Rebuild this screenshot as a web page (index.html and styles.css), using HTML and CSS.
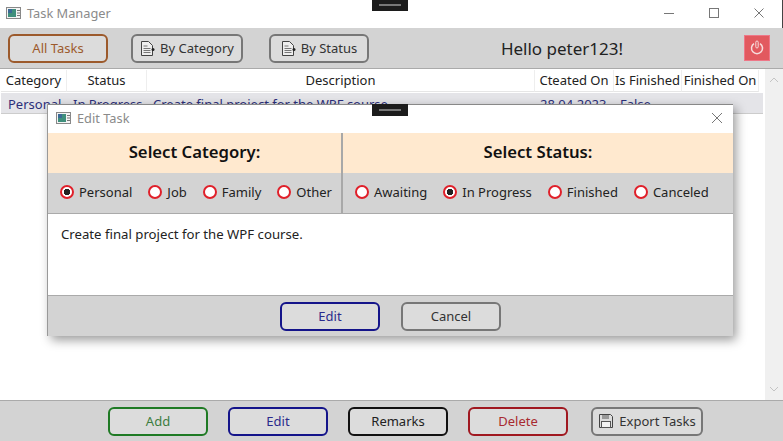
FILE: index.html

```html
<!DOCTYPE html>
<html lang="en">
<head>
  <meta charset="UTF-8" />
  <title>Task Manager</title>
  <link rel="stylesheet" href="styles.css">
</head>
<body>
  <div class="window">
    <div class="titlebar">
      <svg class="app-icon" width="15" height="12" viewBox="0 0 15 12">
        <rect x="0.5" y="0.5" width="14" height="11" fill="#f4f4f4" stroke="#888"/>
        <rect x="2" y="2" width="8" height="8" fill="#3f8f7c"/>
        <rect x="2" y="2" width="4" height="4" fill="#3a6a96"/>
        <path d="M11 3.500h3M11 6h3M11 8.500h3" stroke="#777"/>
      </svg>
      <span class="title">Task Manager</span>
      <div class="win-controls">
        <svg width="12" height="12" viewBox="0 0 12 12"><path d="M1 6.500h10" stroke="#777"/></svg>
        <svg width="12" height="12" viewBox="0 0 12 12"><rect x="1.500" y="1.500" width="9" height="9" fill="none" stroke="#777"/></svg>
        <svg width="12" height="12" viewBox="0 0 12 12"><path d="M1.500 1.500l9 9M10.500 1.500l-9 9" stroke="#777"/></svg>
      </div>
    </div>

    <div class="toolbar">
      <button class="btn btn-orange btn-all">All Tasks</button>
      <button class="btn btn-gray btn-cat">
        <svg class="doc-icon" width="15" height="17" viewBox="0 0 15 17"><path d="M1.500 1.500h7l4 4v10h-11z" fill="#eee" stroke="#444"/><path d="M3.500 6h4M3.500 8.500h7M3.500 10.500h7M3.500 12.500h7" stroke="#777"/><circle cx="13" cy="9.500" r="1.500" fill="#222"/></svg>
        By Category
      </button>
      <button class="btn btn-gray btn-stat">
        <svg class="doc-icon" width="15" height="17" viewBox="0 0 15 17"><path d="M1.500 1.500h7l4 4v10h-11z" fill="#eee" stroke="#444"/><path d="M3.500 6h4M3.500 8.500h7M3.500 10.500h7M3.500 12.500h7" stroke="#777"/><circle cx="13" cy="9.500" r="1.500" fill="#222"/></svg>
        By Status
      </button>
      <div class="hello">Hello peter123!</div>
      <button class="power">
        <svg width="16" height="16" viewBox="0 0 16 16"><path d="M5 3.600a5.500 5.500 0 1 0 6 0" fill="none" stroke="#f6dcdc" stroke-width="1.500"/><rect x="6.800" y="1" width="2.400" height="7" rx="1.200" fill="none" stroke="#f6dcdc"/></svg>
      </button>
    </div>

    <div class="content">
      <div class="table">
        <div class="thead">
          <div class="th">Category</div>
          <div class="th">Status</div>
          <div class="th">Description</div>
          <div class="th">Cteated On</div>
          <div class="th">Is Finished</div>
          <div class="th">Finished On</div>
        </div>
        <div class="trow">
          <div class="td td-first">Personal</div>
          <div class="td">In Progress</div>
          <div class="td">Create final project for the WPF course.</div>
          <div class="td td-date">28.04.2023</div>
          <div class="td">False</div>
          <div class="td"></div>
        </div>
      </div>
      <div class="scrollbar">
        <svg width="10" height="6" viewBox="0 0 10 6"><path d="M1 5l4-4 4 4" fill="none" stroke="#c4c4c4"/></svg>
        <svg width="10" height="6" viewBox="0 0 10 6"><path d="M1 1l4 4 4-4" fill="none" stroke="#c4c4c4"/></svg>
      </div>
    </div>

    <div class="bottombar">
      <button class="btn btn-green">Add</button>
      <button class="btn btn-blue">Edit</button>
      <button class="btn btn-black">Remarks</button>
      <button class="btn btn-red">Delete</button>
      <button class="btn btn-gray btn-export">
        <svg width="16" height="16" viewBox="0 0 16 16"><path d="M1.500 1.500h11l2 2v11h-13z" fill="#ddd" stroke="#444"/><rect x="4" y="2" width="7" height="4" fill="#999"/><rect x="3.500" y="8.500" width="9" height="6" fill="#f2f2f2" stroke="#555"/></svg>
        Export Tasks
      </button>
    </div>
  </div>

  <div class="dialog">
    <div class="dialog-title">
      <svg class="app-icon" width="15" height="12" viewBox="0 0 15 12">
        <rect x="0.5" y="0.5" width="14" height="11" fill="#f4f4f4" stroke="#888"/>
        <rect x="2" y="2" width="8" height="8" fill="#3f8f7c"/>
        <rect x="2" y="2" width="4" height="4" fill="#3a6a96"/>
        <path d="M11 3.500h3M11 6h3M11 8.500h3" stroke="#777"/>
      </svg>
      <span class="title-small">Edit Task</span>
      <svg class="dialog-close" width="12" height="12" viewBox="0 0 12 12"><path d="M1 1l10 10M11 1L1 11" stroke="#777"/></svg>
    </div>
    <div class="selectors">
      <div class="sel sel-cat">
        <div class="sel-head">Select Category:</div>
        <div class="radios">
          <span class="radio on">Personal</span>
          <span class="radio">Job</span>
          <span class="radio">Family</span>
          <span class="radio">Other</span>
        </div>
      </div>
      <div class="sel sel-stat">
        <div class="sel-head">Select Status:</div>
        <div class="radios">
          <span class="radio">Awaiting</span>
          <span class="radio on">In Progress</span>
          <span class="radio">Finished</span>
          <span class="radio">Canceled</span>
        </div>
      </div>
    </div>
    <div class="desc">Create final project for the WPF course.</div>
    <div class="dialog-buttons">
      <button class="btn btn-blue">Edit</button>
      <button class="btn btn-gray btn-cancel">Cancel</button>
    </div>
  </div>

  <div class="handle handle-top"></div>
  <div class="handle handle-mid"></div>
</body>
</html>
```

FILE: styles.css

```css
:root {
  --gray: #d3d3d3;
  --btn: #dcdcdc;
  --text: #222;
}
* {
  box-sizing: border-box;
}
html, body {
  margin: 0;
  height: 100%;
  overflow: hidden;
}
body {
  font-family: "Noto Sans", "Open Sans", sans-serif;
  font-size: 13px;
  color: var(--text);
  background: #fff;
  position: relative;
}
.window {
  height: 441px;
  display: flex;
  flex-direction: column;
}
.titlebar {
  height: 28px;
  display: flex;
  align-items: center;
  padding: 0 0 3px 6px;
  border-right: 1px solid #444;
}
.app-icon {
  flex: none;
}
.title {
  margin-left: 6px;
  color: #8a8a8a;
  font-size: 12.8px;
}
.win-controls {
  margin-left: auto;
  display: flex;
  gap: 33px;
  padding-right: 17px;
}
.toolbar {
  height: 40px;
  background: var(--gray);
  display: flex;
  align-items: center;
  padding-left: 8px;
}
.btn {
  width: 100px;
  height: 29px;
  padding: 0;
  border: 2px solid #777;
  border-radius: 6px;
  background: var(--btn);
  font-family: inherit;
  font-size: 13px;
  color: #333;
  display: flex;
  align-items: center;
  justify-content: center;
  gap: 5px;
}
.btn-orange { border-color: #9c5a2c; color: #9c5a2c; }
.btn-green { border-color: #1f7a24; color: #3c7c40; }
.btn-blue { border-color: #14148a; color: #2a2a8c; }
.btn-black { border-color: #111; color: #222; }
.btn-red { border-color: #a01820; color: #a82a30; }
.btn-gray { border-color: #777; color: #333; }
.btn-cat {
  width: 112px;
  margin-left: 23px;
}
.btn-stat {
  margin-left: 26px;
}
.hello {
  flex: 1;
  text-align: center;
  font-size: 17px;
  padding-left: 11px;
}
.power {
  width: 26px;
  height: 26px;
  margin-right: 13px;
  padding: 0;
  border: 1px solid #e78;
  background: #e2595f;
  display: flex;
  align-items: center;
  justify-content: center;
}
.content {
  flex: 1;
  display: flex;
  border-top: 1px solid #aaa;
  min-height: 0;
}
.table {
  flex: 1;
  padding: 1px 1px 0 1px;
}
.thead, .trow {
  display: grid;
  grid-template-columns: 66px 80px 388px 79px 68px 77px;
}
.thead {
  height: 22px;
  margin-bottom: 1px;
}
.th {
  text-align: center;
  line-height: 21px;
  border-right: 1px solid #eee;
  border-bottom: 1px solid #e6e6e6;
  white-space: nowrap;
}
.trow {
  height: 21px;
  width: 762px;
  background: #e4e4e8;
  color: #2c2f7a;
  border-bottom: 1px solid #ccc;
}
.td {
  padding-left: 6px;
  line-height: 22px;
  white-space: nowrap;
}
.td-first {
  padding-left: 7px;
}
.td-date {
  padding-left: 5px;
}
.scrollbar {
  width: 18px;
  background: #f0f0f0;
  display: flex;
  flex-direction: column;
  justify-content: space-between;
  align-items: center;
  padding: 8px 0;
}
.bottombar {
  height: 41px;
  background: var(--gray);
  border-top: 1px solid #aaa;
  display: flex;
  align-items: center;
  padding-left: 108px;
  gap: 20px;
}
.btn-export {
  width: 112px;
  margin-left: 3px;
}
.dialog {
  position: absolute;
  left: 48px;
  top: 104px;
  width: 685px;
  height: 232px;
  background: #fff;
  display: flex;
  flex-direction: column;
  box-shadow: -1px 0 0 #999, 3px 4px 10px rgba(0,0,0,0.4);
  border-top: 1px solid #888;
}
.dialog-title {
  height: 28px;
  display: flex;
  align-items: center;
  padding: 0 0 2px 8px;
  flex: none;
}
.title-small {
  margin-left: 6px;
  color: #8a8a8a;
  font-size: 12.8px;
}
.dialog-close {
  margin-left: auto;
  margin-right: 10px;
}
.selectors {
  display: flex;
  height: 81px;
  flex: none;
  border-bottom: 1px solid #aaa;
}
.sel-cat {
  width: 295px;
  border-right: 2px solid #a8a8a8;
}
.sel-stat {
  flex: 1;
}
.sel-head {
  height: 40px;
  background: #ffe9cf;
  font-size: 16.7px;
  font-weight: 600;
  color: #111;
  text-align: center;
  line-height: 38px;
}
.radios {
  height: 40px;
  background: var(--gray);
  display: flex;
  align-items: center;
  padding: 0 0 2px 12px;
  gap: 16px;
}
.radio {
  display: flex;
  align-items: center;
  gap: 5px;
  white-space: nowrap;
}
.radio::before {
  content: "";
  box-sizing: border-box;
  width: 14px;
  height: 14px;
  border: 2px solid #e0202a;
  border-radius: 50%;
  background: #fff;
  flex: none;
}
.radio.on::before {
  background: radial-gradient(circle, #222 0 3px, #fff 3.5px);
}
.desc {
  flex: 1;
  padding: 11px 13px;
  font-size: 13.2px;
}
.dialog-buttons {
  height: 41px;
  flex: none;
  background: var(--gray);
  border-top: 1px solid #aaa;
  display: flex;
  align-items: center;
  justify-content: center;
  gap: 21px;
}
.handle {
  position: absolute;
  left: 372px;
  width: 36px;
  height: 12px;
  background: #1c1c1c;
}
.handle::after {
  content: "";
  position: absolute;
  left: 7px;
  right: 7px;
  top: 5px;
  height: 2px;
  background: #777;
}
.handle-top {
  top: -1px;
}
.handle-mid {
  top: 104px;
}
```
